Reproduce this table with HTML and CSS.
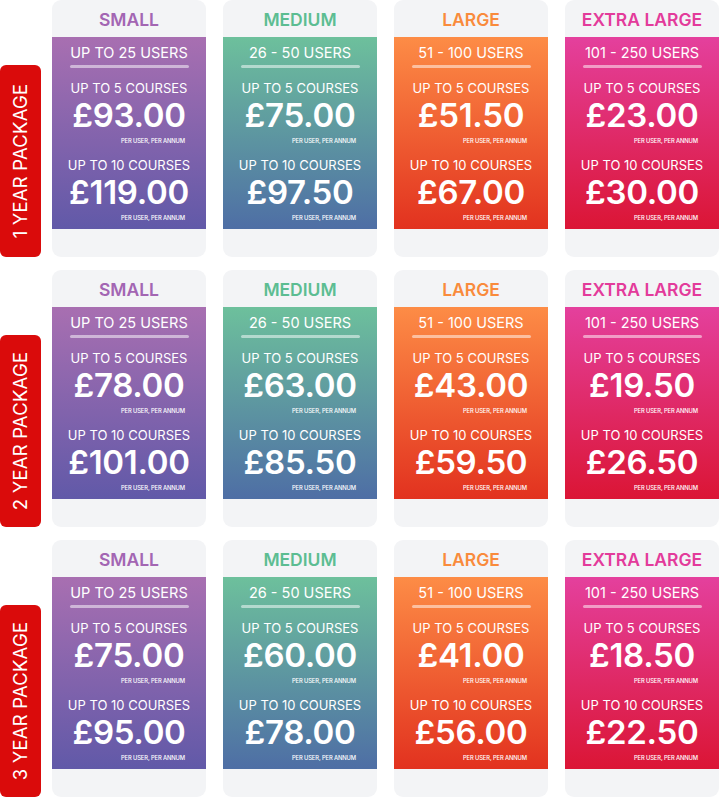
FILE: index.html
```html
<!DOCTYPE html>
<html>
<head>
<meta charset="utf-8">
<link rel="stylesheet" href="styles.css">
</head>
<body>
<div class="table">

  <div class="row">
    <div class="pkg"><span>1 YEAR PACKAGE</span></div>
    <div class="card small">
      <div class="head">SMALL</div>
      <div class="body">
        <div class="users">UP TO 25 USERS</div>
        <div class="rule"></div>
        <div class="tier">UP TO 5 COURSES</div>
        <div class="price">£93.00</div>
        <div class="per">PER USER, PER ANNUM</div>
        <div class="tier">UP TO 10 COURSES</div>
        <div class="price">£119.00</div>
        <div class="per">PER USER, PER ANNUM</div>
      </div>
      <div class="foot"></div>
    </div>
    <div class="card medium">
      <div class="head">MEDIUM</div>
      <div class="body">
        <div class="users">26 - 50 USERS</div>
        <div class="rule"></div>
        <div class="tier">UP TO 5 COURSES</div>
        <div class="price">£75.00</div>
        <div class="per">PER USER, PER ANNUM</div>
        <div class="tier">UP TO 10 COURSES</div>
        <div class="price">£97.50</div>
        <div class="per">PER USER, PER ANNUM</div>
      </div>
      <div class="foot"></div>
    </div>
    <div class="card large">
      <div class="head">LARGE</div>
      <div class="body">
        <div class="users">51 - 100 USERS</div>
        <div class="rule"></div>
        <div class="tier">UP TO 5 COURSES</div>
        <div class="price">£51.50</div>
        <div class="per">PER USER, PER ANNUM</div>
        <div class="tier">UP TO 10 COURSES</div>
        <div class="price">£67.00</div>
        <div class="per">PER USER, PER ANNUM</div>
      </div>
      <div class="foot"></div>
    </div>
    <div class="card xlarge">
      <div class="head">EXTRA LARGE</div>
      <div class="body">
        <div class="users">101 - 250 USERS</div>
        <div class="rule"></div>
        <div class="tier">UP TO 5 COURSES</div>
        <div class="price">£23.00</div>
        <div class="per">PER USER, PER ANNUM</div>
        <div class="tier">UP TO 10 COURSES</div>
        <div class="price">£30.00</div>
        <div class="per">PER USER, PER ANNUM</div>
      </div>
      <div class="foot"></div>
    </div>
  </div>

  <div class="row">
    <div class="pkg"><span>2 YEAR PACKAGE</span></div>
    <div class="card small">
      <div class="head">SMALL</div>
      <div class="body">
        <div class="users">UP TO 25 USERS</div>
        <div class="rule"></div>
        <div class="tier">UP TO 5 COURSES</div>
        <div class="price">£78.00</div>
        <div class="per">PER USER, PER ANNUM</div>
        <div class="tier">UP TO 10 COURSES</div>
        <div class="price">£101.00</div>
        <div class="per">PER USER, PER ANNUM</div>
      </div>
      <div class="foot"></div>
    </div>
    <div class="card medium">
      <div class="head">MEDIUM</div>
      <div class="body">
        <div class="users">26 - 50 USERS</div>
        <div class="rule"></div>
        <div class="tier">UP TO 5 COURSES</div>
        <div class="price">£63.00</div>
        <div class="per">PER USER, PER ANNUM</div>
        <div class="tier">UP TO 10 COURSES</div>
        <div class="price">£85.50</div>
        <div class="per">PER USER, PER ANNUM</div>
      </div>
      <div class="foot"></div>
    </div>
    <div class="card large">
      <div class="head">LARGE</div>
      <div class="body">
        <div class="users">51 - 100 USERS</div>
        <div class="rule"></div>
        <div class="tier">UP TO 5 COURSES</div>
        <div class="price">£43.00</div>
        <div class="per">PER USER, PER ANNUM</div>
        <div class="tier">UP TO 10 COURSES</div>
        <div class="price">£59.50</div>
        <div class="per">PER USER, PER ANNUM</div>
      </div>
      <div class="foot"></div>
    </div>
    <div class="card xlarge">
      <div class="head">EXTRA LARGE</div>
      <div class="body">
        <div class="users">101 - 250 USERS</div>
        <div class="rule"></div>
        <div class="tier">UP TO 5 COURSES</div>
        <div class="price">£19.50</div>
        <div class="per">PER USER, PER ANNUM</div>
        <div class="tier">UP TO 10 COURSES</div>
        <div class="price">£26.50</div>
        <div class="per">PER USER, PER ANNUM</div>
      </div>
      <div class="foot"></div>
    </div>
  </div>

  <div class="row">
    <div class="pkg"><span>3 YEAR PACKAGE</span></div>
    <div class="card small">
      <div class="head">SMALL</div>
      <div class="body">
        <div class="users">UP TO 25 USERS</div>
        <div class="rule"></div>
        <div class="tier">UP TO 5 COURSES</div>
        <div class="price">£75.00</div>
        <div class="per">PER USER, PER ANNUM</div>
        <div class="tier">UP TO 10 COURSES</div>
        <div class="price">£95.00</div>
        <div class="per">PER USER, PER ANNUM</div>
      </div>
      <div class="foot"></div>
    </div>
    <div class="card medium">
      <div class="head">MEDIUM</div>
      <div class="body">
        <div class="users">26 - 50 USERS</div>
        <div class="rule"></div>
        <div class="tier">UP TO 5 COURSES</div>
        <div class="price">£60.00</div>
        <div class="per">PER USER, PER ANNUM</div>
        <div class="tier">UP TO 10 COURSES</div>
        <div class="price">£78.00</div>
        <div class="per">PER USER, PER ANNUM</div>
      </div>
      <div class="foot"></div>
    </div>
    <div class="card large">
      <div class="head">LARGE</div>
      <div class="body">
        <div class="users">51 - 100 USERS</div>
        <div class="rule"></div>
        <div class="tier">UP TO 5 COURSES</div>
        <div class="price">£41.00</div>
        <div class="per">PER USER, PER ANNUM</div>
        <div class="tier">UP TO 10 COURSES</div>
        <div class="price">£56.00</div>
        <div class="per">PER USER, PER ANNUM</div>
      </div>
      <div class="foot"></div>
    </div>
    <div class="card xlarge">
      <div class="head">EXTRA LARGE</div>
      <div class="body">
        <div class="users">101 - 250 USERS</div>
        <div class="rule"></div>
        <div class="tier">UP TO 5 COURSES</div>
        <div class="price">£18.50</div>
        <div class="per">PER USER, PER ANNUM</div>
        <div class="tier">UP TO 10 COURSES</div>
        <div class="price">£22.50</div>
        <div class="per">PER USER, PER ANNUM</div>
      </div>
      <div class="foot"></div>
    </div>
  </div>

</div>
</body>
</html>
```

FILE: styles.css
```css
* { box-sizing: border-box; }

html, body {
  margin: 0;
  padding: 0;
  background: #ffffff;
  font-family: "Inter", "Open Sans", sans-serif;
}

.table {
  display: flex;
  flex-direction: column;
  gap: 13px;
  width: 720px;
}

.row {
  display: flex;
  align-items: flex-end;
  gap: 17px;
  height: 257px;
}

.pkg {
  width: 41px;
  height: 192px;
  margin-right: -6px;
  background: #da0b0b;
  border-radius: 6px;
  display: flex;
  align-items: center;
  justify-content: center;
  flex-shrink: 0;
}

.pkg span {
  display: block;
  transform: rotate(-90deg);
  white-space: nowrap;
  color: #ffffff;
  font-size: 18.5px;
  font-weight: 400;
  letter-spacing: 0.2px;
}

.card {
  width: 154px;
  height: 257px;
  flex-shrink: 0;
  background: #f3f4f6;
  border-radius: 9px;
  overflow: hidden;
  display: flex;
  flex-direction: column;
}

.head {
  height: 37px;
  flex-shrink: 0;
  display: flex;
  align-items: center;
  justify-content: center;
  font-size: 17.5px;
  font-weight: 600;
  padding-top: 2px;
}

.body {
  height: 192px;
  flex-shrink: 0;
  color: #ffffff;
  display: flex;
  flex-direction: column;
  align-items: center;
  padding-top: 6px;
}

.body > div { flex-shrink: 0; }

.foot {
  flex: 1;
}

.users {
  font-size: 14.5px;
  line-height: 20px;
  height: 20px;
}

.rule {
  width: 119px;
  height: 3px;
  border-radius: 2px;
  background: rgba(255, 255, 255, 0.5);
  margin-top: 2px;
  margin-bottom: 11px;
}

.tier {
  font-size: 13px;
  line-height: 18px;
  height: 18px;
}

.price {
  font-size: 33px;
  font-weight: 600;
  line-height: 36px;
  height: 36px;
  letter-spacing: -0.3px;
}

.per {
  align-self: flex-end;
  margin-right: 21px;
  font-size: 5.8px;
  font-weight: 500;
  line-height: 8px;
  height: 8px;
  margin-top: 4px;
  margin-bottom: 11px;
  letter-spacing: -0.1px;
}

.small .head { color: #a366b3; }
.medium .head { color: #5cbd92; }
.large .head { color: #f98b3c; }
.xlarge .head { color: #e33b9b; }

.small .body { background: linear-gradient(180deg, #a86fb1 0%, #6159a8 100%); }
.medium .body { background: linear-gradient(180deg, #6dc09c 0%, #4e6ea5 100%); }
.large .body { background: linear-gradient(180deg, #fd8c46 0%, #e2321f 100%); }
.xlarge .body { background: linear-gradient(180deg, #e4409d 0%, #db1535 100%); }
```
